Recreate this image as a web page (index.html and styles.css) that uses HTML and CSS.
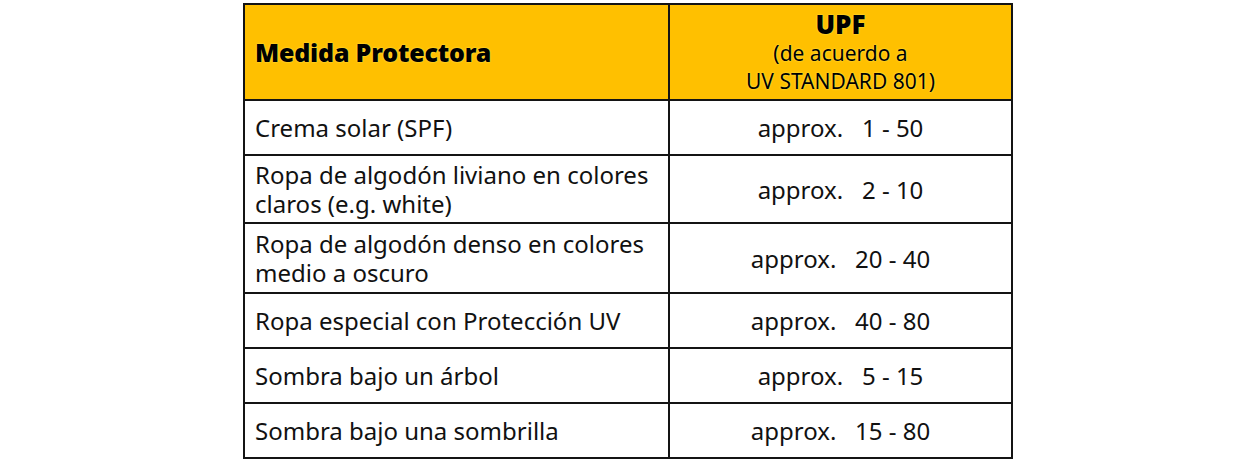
FILE: index.html
```html
<!DOCTYPE html>
<html lang="es">
<head>
<meta charset="utf-8">
<link rel="stylesheet" href="styles.css">
</head>
<body>
<table class="upf">
  <colgroup><col class="c1"><col class="c2"></colgroup>
  <thead>
    <tr class="head">
      <th class="h1">Medida Protectora</th>
      <th class="h2"><span class="upf-t">UPF</span><span class="sub">(de acuerdo a<br>UV STANDARD 801)</span></th>
    </tr>
  </thead>
  <tbody>
    <tr class="r1"><td>Crema solar (SPF)</td><td class="v">approx.   1 - 50</td></tr>
    <tr class="r2"><td>Ropa de algodón liviano en colores<br>claros (e.g. white)</td><td class="v">approx.   2 - 10</td></tr>
    <tr class="r2 tall"><td>Ropa de algodón denso en colores<br>medio a oscuro</td><td class="v">approx.   20 - 40</td></tr>
    <tr class="r1"><td>Ropa especial con Protección UV</td><td class="v">approx.   40 - 80</td></tr>
    <tr class="r1"><td>Sombra bajo un árbol</td><td class="v">approx.   5 - 15</td></tr>
    <tr class="r1"><td>Sombra bajo una sombrilla</td><td class="v">approx.   15 - 80</td></tr>
  </tbody>
</table>
</body>
</html>
```
FILE: styles.css
```css
html, body { margin: 0; padding: 0; background: #ffffff; }
body { font-family: "Noto Sans", "Open Sans", sans-serif; color: #111; }
.upf {
  margin: 3px 0 0 243px;
  border-collapse: collapse;
  width: 768px;
  table-layout: fixed;
}
.c1 { width: 425px; }
.c2 { width: 343px; }
.upf th, .upf td {
  border: 2px solid #141414;
  padding: 0 0 0 10px;
  font-size: 24px;
  line-height: 29px;
  vertical-align: middle;
  text-align: left;
  font-weight: 400;
}
.upf td.v, .upf th.h2 { text-align: center; padding: 0; white-space: pre; }
.head th {
  background: #ffc000;
  height: 94px;
  text-shadow: 0 0 2px #ffe34d, 0 0 1px #ffe34d;
  color: #000;
}
.upf th.h1 { font-weight: 900; font-size: 25px; letter-spacing: -0.2px; }
.upf th.h2 { padding-top: 0; }
.upf-t { display: block; font-weight: 900; font-size: 26px; line-height: 30px; }
.sub { display: block; font-size: 21px; line-height: 28px; white-space: normal; }
.r1 td { height: 53px; }
.r2 td { height: 66px; }
.r2.tall td { height: 68px; }
```
